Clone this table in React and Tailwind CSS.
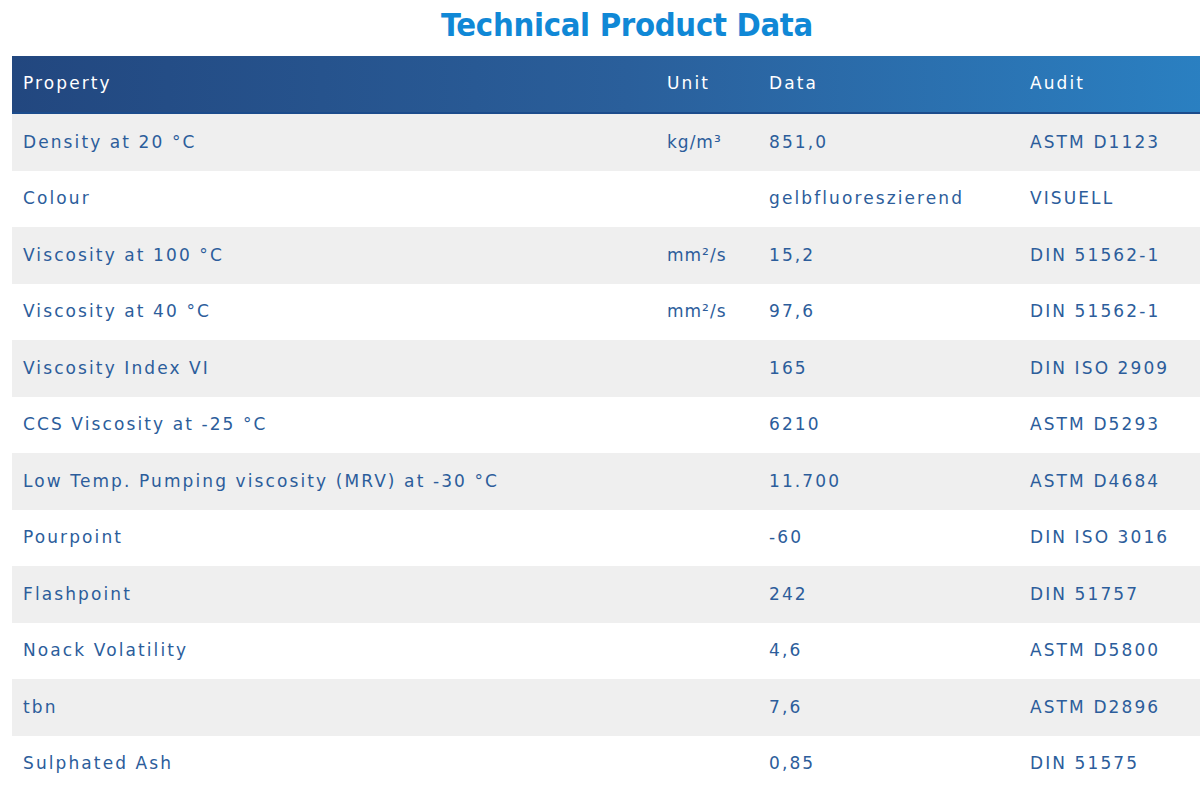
import React from "react";

const rows = [
  { property: "Density at 20 °C", unit: "kg/m³", data: "851,0", audit: "ASTM D1123" },
  { property: "Colour", unit: "", data: "gelbfluoreszierend", audit: "VISUELL" },
  { property: "Viscosity at 100 °C", unit: "mm²/s", data: "15,2", audit: "DIN 51562-1" },
  { property: "Viscosity at 40 °C", unit: "mm²/s", data: "97,6", audit: "DIN 51562-1" },
  { property: "Viscosity Index VI", unit: "", data: "165", audit: "DIN ISO 2909" },
  { property: "CCS Viscosity at -25 °C", unit: "", data: "6210", audit: "ASTM D5293" },
  { property: "Low Temp. Pumping viscosity (MRV) at -30 °C", unit: "", data: "11.700", audit: "ASTM D4684" },
  { property: "Pourpoint", unit: "", data: "-60", audit: "DIN ISO 3016" },
  { property: "Flashpoint", unit: "", data: "242", audit: "DIN 51757" },
  { property: "Noack Volatility", unit: "", data: "4,6", audit: "ASTM D5800" },
  { property: "tbn", unit: "", data: "7,6", audit: "ASTM D2896" },
  { property: "Sulphated Ash", unit: "", data: "0,85", audit: "DIN 51575" },
];

const cellFont = "font-['DejaVu_Sans',sans-serif] text-[17px] tracking-[2.1px]";

function Row({ row, idx }) {
  return (
    <div
      className={
        "flex items-center h-[56.5px] text-[#2c5d9b] " +
        cellFont +
        (idx % 2 === 0 ? " bg-[#efefef]" : " bg-white")
      }
    >
      <div className="w-[655px] pl-[11px] whitespace-nowrap">{row.property}</div>
      <div className="w-[102px] whitespace-nowrap tracking-[1px]">{row.unit}</div>
      <div className="w-[261px] whitespace-nowrap">{row.data}</div>
      <div className="flex-1 whitespace-nowrap">{row.audit}</div>
    </div>
  );
}

export default function App() {
  return (
    <div className="w-[1200px] h-[790px] overflow-hidden bg-white">
      <div className="w-[1230px] ml-[12px]">
        {/* Title */}
        <h1 className="h-[56px] pt-[5px] text-center font-['DejaVu_Sans_Condensed','DejaVu_Sans',sans-serif] font-bold text-[32.5px] leading-[40px] tracking-[-0.3px] text-[#1088d6]">
          Technical Product Data
        </h1>

        {/* Header */}
        <div
          className={
            "flex items-center h-[58px] text-white bg-gradient-to-r from-[#22477f] via-[#2a5f9b] to-[#2a82c4] border-b-2 border-[#1c4c8c] " +
            cellFont
          }
        >
          <div className="w-[655px] pl-[11px]">Property</div>
          <div className="w-[102px]">Unit</div>
          <div className="w-[261px]">Data</div>
          <div className="flex-1">Audit</div>
        </div>

        {rows.map((row, idx) => (
          <Row key={idx} row={row} idx={idx} />
        ))}
      </div>
    </div>
  );
}
